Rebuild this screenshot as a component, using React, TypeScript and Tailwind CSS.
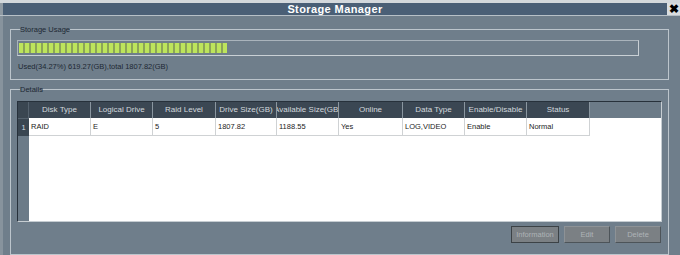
import React from "react";

const cols = [
  { h: "Disk Type", v: "RAID", w: "w-[62px]" },
  { h: "Logical Drive", v: "E", w: "w-[62px]" },
  { h: "Raid Level", v: "5", w: "w-[63px]" },
  { h: "Drive Size(GB)", v: "1807.82", w: "w-[61px]" },
  { h: "Available Size(GB)", v: "1188.55", w: "w-[62px]" },
  { h: "Online", v: "Yes", w: "w-[64px]" },
  { h: "Data Type", v: "LOG,VIDEO", w: "w-[62px]" },
  { h: "Enable/Disable", v: "Enable", w: "w-[62px]" },
  { h: "Status", v: "Normal", w: "w-[63px]" },
];

export default function App() {
  const segs = Array.from({ length: 35 });
  return (
    <div
      className="w-[680px] h-[255px] overflow-hidden bg-[#d3d8dc] pt-[3px] flex flex-col"
      style={{ fontFamily: '"Liberation Sans", Arial, sans-serif' }}
    >
      {/* title bar */}
      <div className="h-[12px] flex items-stretch border-l-[3px] border-[#8f9aa3] bg-[#4a5f76]">
        <div className="flex-1 flex items-center justify-center text-white font-bold text-[11px] leading-[12px] tracking-[0.4px]">
          Storage Manager
        </div>
        <div className="w-[13px] bg-[#d9dde0] flex items-center justify-center text-black font-bold text-[12px] leading-[12px]">
          ✖
        </div>
      </div>
      <div className="h-[1px] bg-[#b7c0c7]" />
      {/* body */}
      <div className="flex-1 bg-[#6f7e8b] border-l-[3px] border-[#87939d] pl-[7px] flex flex-col">
        {/* Storage usage */}
        <fieldset className="mt-[9px] w-[659px] border border-[#bcc5cc] px-[6px] pb-[8px]">
          <legend className="ml-[3px] text-[7.5px] leading-[9px] text-[#1d2833]">Storage Usage</legend>
          <div className="mt-[6px] w-[622px] h-[16px] border border-[#aab4bc] border-r-[#c9d0d5] border-b-[#c9d0d5] px-[1px] py-[2px] flex">
            <div className="flex gap-[2px] h-full bg-[#8ba458]">
              {segs.map((_, i) => (
                <div key={i} className="w-[4px] h-full bg-[#bde45c]" />
              ))}
            </div>
          </div>
          <div className="mt-[6px] ml-[1px] text-[7.5px] leading-[9px] text-[#1d2833]">
            Used(34.27%) 619.27(GB),total 1807.82(GB)
          </div>
        </fieldset>

        {/* Details */}
        <fieldset className="mt-[5px] w-[659px] border border-[#bcc5cc] px-[6px] pb-[6px] flex-1">
          <legend className="ml-[3px] text-[7.5px] leading-[9px] text-[#1d2833]">Details</legend>
          <div className="mt-[7px] w-[645px] h-[121px] border border-[#27313b] border-r-[#c6cdd2] border-b-[#c6cdd2] flex flex-col">
            {/* header */}
            <div className="h-[16px] flex">
              <div className="w-[11px] bg-[#3a4651] border-r border-[#55626e]" />
              {cols.map((c) => (
                <div
                  key={c.h}
                  className={`${c.w} shrink-0 bg-[#3b4753] border-r border-[#8a96a0] flex items-center justify-center overflow-hidden whitespace-nowrap text-[8px] text-[#d3d9de]`}
                >
                  <span>{c.h}</span>
                </div>
              ))}
              <div className="flex-1 bg-[#6c7b88]" />
            </div>
            {/* body */}
            <div className="flex-1 flex">
              <div className="w-[11px] bg-[#6c7b88] flex flex-col">
                <div className="h-[18px] bg-[#3a4651] border-t border-[#55626e] flex items-center justify-center text-[7.5px] text-[#d7dde2]">
                  1
                </div>
              </div>
              <div className="flex-1 bg-white">
                <div className="flex h-[18px]">
                  {cols.map((c) => (
                    <div
                      key={c.h}
                      className={`${c.w} shrink-0 border-r border-b border-[#cfd2d4] flex items-center pl-[2px] overflow-hidden whitespace-nowrap text-[7.5px] text-[#1c1c1c]`}
                    >
                      {c.v}
                    </div>
                  ))}
                </div>
              </div>
            </div>
          </div>
          {/* buttons */}
          <div className="mt-[4px] w-[645px] flex justify-end gap-[5px] pr-[1px]">
            <div className="w-[48px] h-[17px] bg-[#7b8084] border border-[#3c4246] flex items-center justify-center text-[7.5px] text-[#aeb3b7]">
              Information
            </div>
            <div className="w-[46px] h-[17px] bg-[#7b8084] border border-[#8d9296] border-r-[#4d5459] border-b-[#4d5459] flex items-center justify-center text-[7.5px] text-[#aeb3b7]">
              Edit
            </div>
            <div className="w-[46px] h-[17px] bg-[#7b8084] border border-[#8d9296] border-r-[#4d5459] border-b-[#4d5459] flex items-center justify-center text-[7.5px] text-[#aeb3b7]">
              Delete
            </div>
          </div>
        </fieldset>
      </div>
    </div>
  );
}
